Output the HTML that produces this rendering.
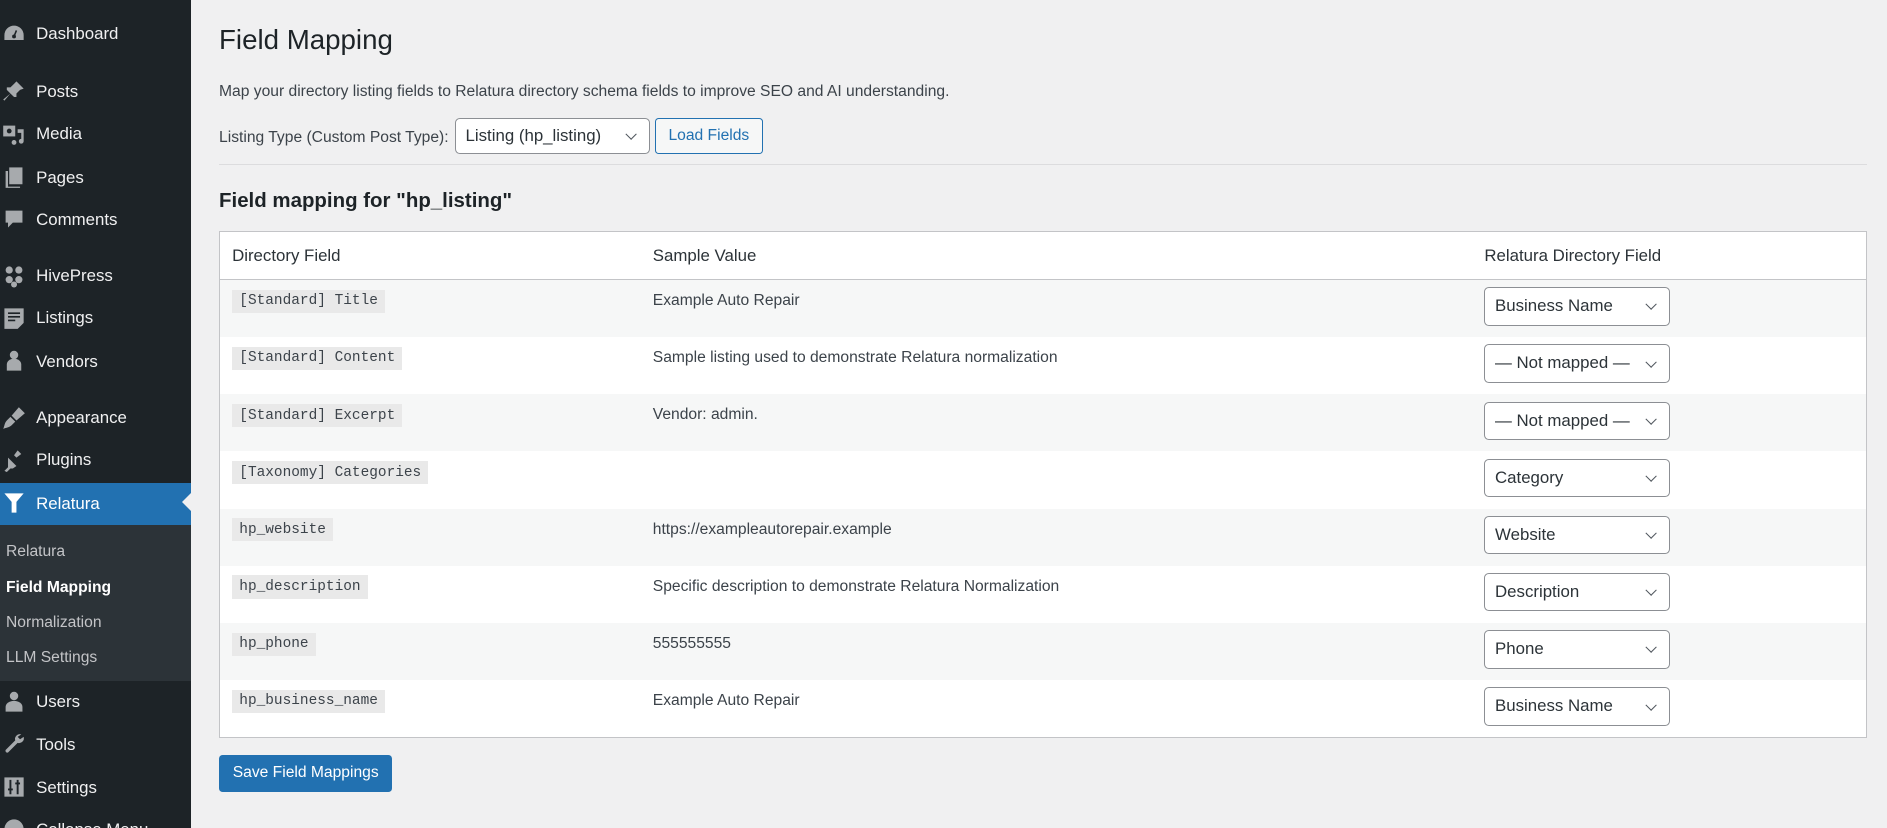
<!DOCTYPE html>
<html><head><meta charset="utf-8">
<style>
html,body{margin:0;padding:0;overflow:hidden;background:#f0f0f1;}
#w{zoom:1.2035;width:1568px;height:688px;position:relative;font-family:"Liberation Sans",sans-serif;font-size:13px;color:#3c434a;}
#sb{position:absolute;left:0;top:0;width:159px;height:688px;background:#1d2327;}
.mi{position:absolute;left:0;width:159px;height:34px;color:#f0f0f1;font-size:14px;line-height:34px;}
.mi span{position:absolute;left:30px;top:1px;}
.ic{position:absolute;left:2px;top:7px;width:20px;height:20px;}
.cur{background:#2271b1;color:#fff;}
.cur:after{content:"";position:absolute;right:0;top:9px;border:8px solid transparent;border-right-color:#f0f0f1;}
#sub{position:absolute;left:0;top:436px;width:159px;height:130px;background:#2c3338;}
.si{position:absolute;left:5px;font-size:13px;color:#c3c4c7;}
#main{position:absolute;left:182px;top:0;right:17px;}
h1{position:absolute;top:20px;left:0;margin:0;font-size:23px;font-weight:400;color:#1d2327;}
.desc{position:absolute;top:69px;left:0;}
.lbl{position:absolute;top:107px;left:0;}
.sel{position:absolute;box-sizing:border-box;border:1px solid #8c8f94;border-radius:4px;background:#fff;color:#2c3338;font-size:14px;padding-left:8px;}
.sel:after{content:"";position:absolute;right:11px;top:50%;width:6px;height:6px;border-right:1.6px solid #50575e;border-bottom:1.6px solid #50575e;transform:translateY(-70%) rotate(45deg);}
.btn{position:absolute;box-sizing:border-box;border:1px solid #2271b1;border-radius:3px;background:#f6f7f7;color:#2271b1;text-align:center;}
hr{position:absolute;top:136px;left:0;right:0;margin:0;border:0;border-top:1px solid #dcdcde;}
h2{position:absolute;top:157px;left:0;margin:0;font-size:17px;font-weight:700;color:#1d2327;}
table{position:absolute;top:192px;left:0;width:1369px;border:1px solid #c3c4c7;border-collapse:collapse;background:#fff;}
th{text-align:left;font-weight:400;font-size:14px;color:#2c3338;height:39px;border-bottom:1px solid #c3c4c7;padding:0 0 0 10px;}
td{height:47.5px;padding:0 0 0 10px;vertical-align:top;position:relative;}
tr.s td{background:#f6f7f7;}
code{font-family:"Liberation Mono",monospace;font-size:12px;background:#e9e9e9;padding:3px 6px;display:inline-block;margin-top:8px;color:#3c434a;}
.sv{display:inline-block;margin-top:10px;}
td .sel{position:relative;display:block;width:154px;height:32px;line-height:30px;margin-top:6px;}
.save{position:absolute;top:627px;left:0;width:144px;height:31px;line-height:30px;background:#2271b1;color:#fff;border-radius:3px;text-align:center;}
</style></head><body><div id="w">
<div id="sb">
<div class="mi" style="top:11px"><svg class="ic" viewBox="0 0 20 20"><path d="M10 3a8 8 0 0 0-8 8v4h16v-4a8 8 0 0 0-8-8z" fill="#a7aaad"/><circle cx="10" cy="12" r="1.6" fill="#1d2327"/><path d="M10 12l2-5" stroke="#1d2327" stroke-width="1.3"/></svg><span>Dashboard</span></div>
<div class="mi" style="top:59px"><svg class="ic" viewBox="0 0 20 20"><path d="M12 2l6 6-3 1-3 3 0 3-2 0-3-3-5 6-1-1 6-5-3-3 0-2 3 0 3-3z" fill="#a7aaad"/></svg><span>Posts</span></div>
<div class="mi" style="top:94px"><svg class="ic" viewBox="0 0 20 20"><rect x="1" y="3" width="10" height="9" fill="#a7aaad"/><circle cx="6" cy="7.5" r="2" fill="#1d2327"/><path d="M13 6h5v10a2 2 0 1 1-2-2V9h-3z" fill="#a7aaad"/><circle cx="10" cy="17" r="2" fill="#a7aaad"/></svg><span>Media</span></div>
<div class="mi" style="top:130px"><svg class="ic" viewBox="0 0 20 20"><rect x="6" y="2" width="11" height="14" fill="#a7aaad"/><path d="M3 5h2v13h10v1H3z" fill="#a7aaad"/></svg><span>Pages</span></div>
<div class="mi" style="top:165px"><svg class="ic" viewBox="0 0 20 20"><path d="M3 3h14v10H9l-4 4v-4H3z" fill="#a7aaad"/></svg><span>Comments</span></div>
<div class="mi" style="top:212px"><svg class="ic" viewBox="0 0 20 20"><g fill="#a7aaad"><circle cx="6" cy="5" r="3"/><circle cx="14" cy="5" r="3"/><circle cx="6" cy="13" r="3"/><circle cx="14" cy="13" r="3"/><circle cx="10" cy="17" r="2.5"/></g></svg><span>HivePress</span></div>
<div class="mi" style="top:247px"><svg class="ic" viewBox="0 0 20 20"><path d="M2 2h16v12l-5 5H2z" fill="#a7aaad"/><path d="M5 6h10M5 9h10M5 12h6" stroke="#1d2327" stroke-width="1.3"/></svg><span>Listings</span></div>
<div class="mi" style="top:283px"><svg class="ic" viewBox="0 0 20 20"><circle cx="10" cy="5" r="3.5" fill="#a7aaad"/><path d="M4 18v-5a6 5 0 0 1 12 0v5z" fill="#a7aaad"/></svg><span>Vendors</span></div>
<div class="mi" style="top:330px"><svg class="ic" viewBox="0 0 20 20"><path d="M14 1l5 5-7 6-4-4z M7 9l4 4-3 3c-2 2-5 2-7 3 1-2 1-5 3-7z" fill="#a7aaad"/></svg><span>Appearance</span></div>
<div class="mi" style="top:365px"><svg class="ic" viewBox="0 0 20 20"><path d="M13 2l-3 4 2 2 4-3zM5 8l7 7-3 2-2 0-3 3-2-1 3-3 0-2z" fill="#a7aaad"/></svg><span>Plugins</span></div>
<div class="mi cur" style="top:401px;height:35px"><svg class="ic" viewBox="0 0 20 20"><path d="M2 2h16l-6 7v9h-4V9z" fill="#fff"/></svg><span>Relatura</span></div>
<div id="sub">
<div class="si" style="top:15px">Relatura</div>
<div class="si" style="top:45px;color:#fff;font-weight:700">Field Mapping</div>
<div class="si" style="top:74px">Normalization</div>
<div class="si" style="top:103px">LLM Settings</div>
</div>
<div class="mi" style="top:566px"><svg class="ic" viewBox="0 0 20 20"><circle cx="10" cy="5" r="3.5" fill="#a7aaad"/><path d="M3 18v-4a7 5 0 0 1 14 0v4z" fill="#a7aaad"/></svg><span>Users</span></div>
<div class="mi" style="top:601px"><svg class="ic" viewBox="0 0 20 20"><path d="M16 2a4 4 0 0 0-5 5l-8 8a1.5 1.5 0 0 0 2 2l8-8a4 4 0 0 0 5-5l-3 2-2-2z" fill="#a7aaad"/></svg><span>Tools</span></div>
<div class="mi" style="top:637px"><svg class="ic" viewBox="0 0 20 20"><rect x="2" y="2" width="16" height="16" fill="#a7aaad"/><path d="M7 4v12M13 4v12M5 12h4M11 7h4" stroke="#1d2327" stroke-width="1.6"/></svg><span>Settings</span></div>
<div class="mi" style="top:672px"><svg class="ic" viewBox="0 0 20 20"><circle cx="10" cy="10" r="8" fill="#a7aaad"/></svg><span>Collapse Menu</span></div>
</div>
<div id="main">
<h1>Field Mapping</h1>
<div class="desc">Map your directory listing fields to Relatura directory schema fields to improve SEO and AI understanding.</div>
<div class="lbl">Listing Type (Custom Post Type):</div>
<div class="sel" style="left:196px;top:98px;width:162px;height:30px;line-height:28px">Listing (hp_listing)</div>
<div class="btn" style="left:362px;top:98px;width:90px;height:30px;line-height:28px">Load Fields</div>
<hr>
<h2>Field mapping for "hp_listing"</h2>
<table>
<colgroup><col style="width:350px"><col style="width:691px"><col></colgroup>
<tr><th>Directory Field</th><th>Sample Value</th><th>Relatura Directory Field</th></tr>
<tr class="s"><td><code>[Standard] Title</code></td><td><span class="sv">Example Auto Repair</span></td><td><div class="sel">Business Name</div></td></tr>
<tr><td><code>[Standard] Content</code></td><td><span class="sv">Sample listing used to demonstrate Relatura normalization</span></td><td><div class="sel">— Not mapped —</div></td></tr>
<tr class="s"><td><code>[Standard] Excerpt</code></td><td><span class="sv">Vendor: admin.</span></td><td><div class="sel">— Not mapped —</div></td></tr>
<tr><td><code>[Taxonomy] Categories</code></td><td></td><td><div class="sel">Category</div></td></tr>
<tr class="s"><td><code>hp_website</code></td><td><span class="sv">https://exampleautorepair.example</span></td><td><div class="sel">Website</div></td></tr>
<tr><td><code>hp_description</code></td><td><span class="sv">Specific description to demonstrate Relatura Normalization</span></td><td><div class="sel">Description</div></td></tr>
<tr class="s"><td><code>hp_phone</code></td><td><span class="sv">555555555</span></td><td><div class="sel">Phone</div></td></tr>
<tr><td><code>hp_business_name</code></td><td><span class="sv">Example Auto Repair</span></td><td><div class="sel">Business Name</div></td></tr>
</table>
<div class="save">Save Field Mappings</div>
</div>
</div></body></html>
